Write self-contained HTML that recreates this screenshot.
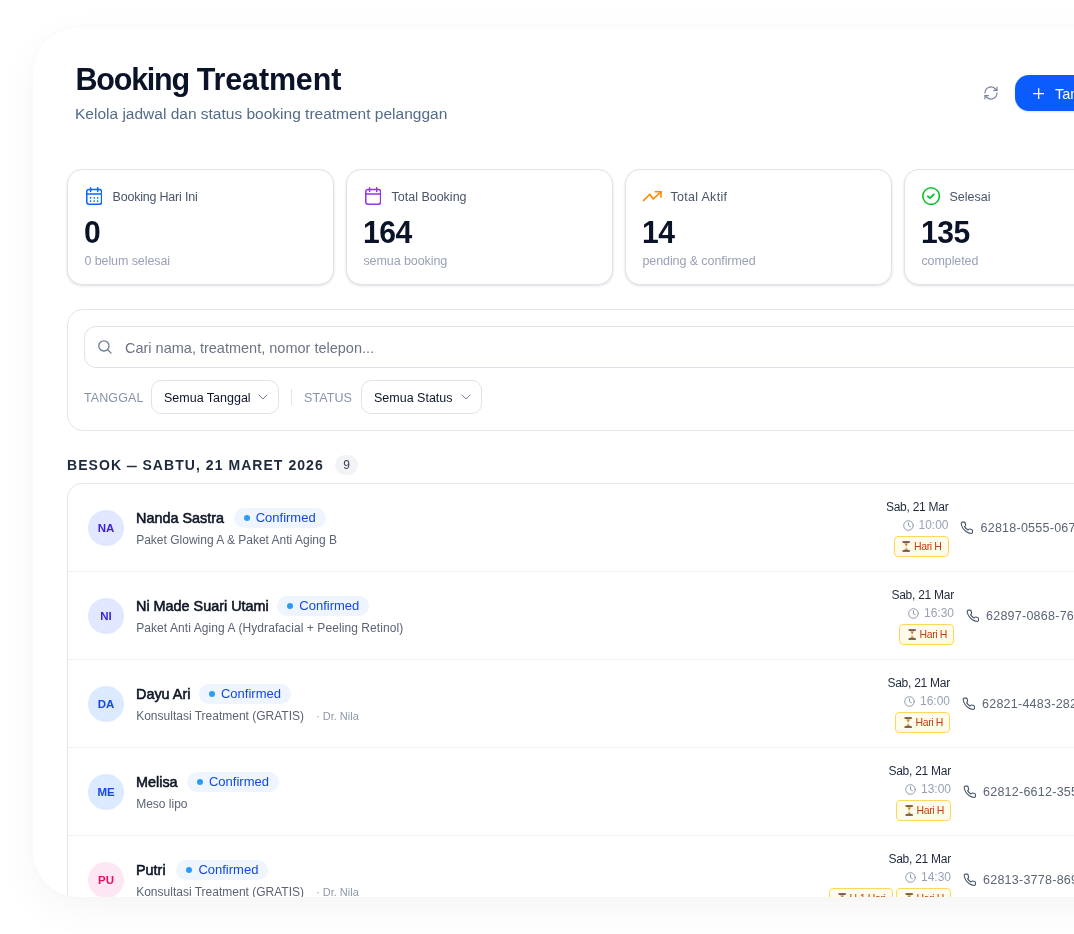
<!DOCTYPE html>
<html lang="id">
<head>
<meta charset="utf-8">
<title>Booking Treatment</title>
<style>
*{box-sizing:border-box;margin:0;padding:0}
html,body{width:1074px;height:934px;overflow:hidden;background:#fff}
body{font-family:"Liberation Sans",sans-serif;color:#0f172a;position:relative}
.card{position:absolute;left:33px;top:28px;width:1400px;height:868.5px;will-change:transform;background:#fff;border-radius:46px;overflow:hidden;
  box-shadow:0 12px 40px rgba(0,0,0,.042),0 0 18px rgba(0,0,0,.022)}
.shadow{position:absolute;left:33px;top:28px;width:1400px;height:868px;border-radius:46px;}
.abs{position:absolute;white-space:nowrap}
/* header */
.title{left:42.6px;top:33.4px;font-size:30.5px;font-weight:700;letter-spacing:-.58px;color:#0b1329;line-height:36px}
.subtitle{left:42px;top:76px;font-size:15.5px;color:#536b8a;line-height:20px}
.refresh{left:949.7px;top:56.7px;width:16px;height:16px;color:#72819a}
.btn{left:982px;top:47px;height:36px;width:190px;border-radius:14px;background:#0b5cff;color:#fff;font-size:14.5px;
  display:flex;align-items:center;padding-left:18px;padding-top:1px;box-shadow:0 1px 2px rgba(15,23,42,.12)}
.btn svg{width:11.4px;height:11.4px;margin-right:10.6px;flex:none}
/* stat cards */
.stat{top:141px;width:267px;height:116px;border:1px solid #e0e3e9;border-radius:15px;background:#fff;
  box-shadow:0 1px 2.5px rgba(15,23,42,.14)}
.stat .ic{position:absolute;left:18px;top:17px;width:16.4px;height:18px}
.stat .lb{position:absolute;left:44.5px;top:19px;font-size:12.5px;line-height:16px;color:#475569}
.stat .num{position:absolute;left:16px;top:43.5px;font-size:32px;line-height:36px;font-weight:700;color:#0b1329;letter-spacing:-.5px;transform:scaleX(.94);transform-origin:0 0}
.stat .sub{position:absolute;left:16.4px;top:83px;font-size:12.5px;letter-spacing:-.08px;line-height:16px;color:#98a2b6}
/* filter */
.filter{left:34px;top:281px;width:1300px;height:122px;border:1px solid #e2e5ec;border-radius:16px;background:#fff}
.search{left:16px;top:16px;width:1200px;height:42px;border:1px solid #dfe3ea;border-radius:12px;background:#fff}
.search svg{position:absolute;left:12.5px;top:13.2px;width:14px;height:14px;color:#6b7c95}
.search span{position:absolute;left:40px;top:12px;font-size:14.5px;line-height:18px;color:#6b7483}
.flabel{font-size:12.5px;letter-spacing:.1px;color:#8793ab;line-height:16px}
.select{height:33.5px;border:1px solid #dfe3ea;border-radius:10px;background:#fff;font-size:12.5px;color:#0f172a;line-height:35px;padding-left:12px;overflow:hidden}
.select svg{position:absolute;right:10px;top:13px;width:10px;height:6px;color:#75839a}
.vdiv{width:1px;height:16px;background:#dfe3ea}
/* section */
.sechead{left:34px;top:428px;font-size:14px;font-weight:700;letter-spacing:1.05px;color:#1e293b;line-height:18px}
.count{left:302px;top:427px;width:23px;height:20px;border-radius:10px;background:#f1f3f6;color:#334155;font-size:12px;line-height:20px;text-align:center}
.list{left:34px;top:455px;width:1300px;height:900px;border:1px solid #e2e5ec;border-radius:15px;background:#fff}
.row{position:absolute;left:0;width:100%;height:88px;border-bottom:1px solid #eef0f4}
.av{position:absolute;left:20px;top:25.5px;width:36px;height:36px;border-radius:50%;font-size:11.5px;font-weight:700;line-height:36px;text-align:center}
.nm{position:absolute;left:68px;top:25px;font-size:14.4px;font-weight:400;-webkit-text-stroke:.55px #0b1220;color:#0b1220;line-height:18px;color:#0f172a;white-space:nowrap}
.badge{position:relative;display:inline-block;vertical-align:top;top:-1.2px;margin-left:8.6px;font-weight:400;-webkit-text-stroke:0;height:20px;border-radius:10px;background:#eef5ff;color:#1447e6;font-size:13px;line-height:20px;padding:0 10px 0 22px;white-space:nowrap}
.badge i{position:absolute;left:10px;top:7px;width:6px;height:6px;border-radius:50%;background:#2b9bf5}
.tr{position:absolute;left:68.2px;top:47.8px;font-size:12px;line-height:16px;color:#5b6475;white-space:nowrap}
.tr em{font-style:normal;color:#8e98ab;margin-left:12px;font-size:11px}
.rt{position:absolute;top:0;height:88px}
.dt{position:absolute;right:-.5px;top:14.7px;font-size:12px;letter-spacing:-.25px;line-height:16px;color:#1e293b;white-space:nowrap}
.tm{position:absolute;right:-.5px;top:33px;font-size:12px;line-height:16px;color:#98a2b6;white-space:nowrap}
.tm svg{position:absolute;left:-15.5px;top:2.5px;width:11px;height:11px}
.hh{position:absolute;right:-.6px;top:51.8px;height:20.8px;border:1px solid #fcd75a;background:#fffbea;border-radius:4px;color:#c2410c;font-size:10.5px;letter-spacing:-.4px;line-height:18.8px;padding:0 6.2px 0 19.2px;white-space:nowrap}
.hh svg{position:absolute;left:7.6px;top:3.8px;width:8.4px;height:11px}
.ph{position:absolute;top:35px;font-size:12.5px;letter-spacing:.25px;line-height:18px;color:#5b6475;white-space:nowrap}
.ph svg{position:absolute;left:-20.5px;top:1.8px;width:13.6px;height:13.6px;color:#475569}
</style>
</head>
<body>
<div class="card">
  <div class="abs title"><span style="letter-spacing:-1.25px">Booking</span> <span style="letter-spacing:-.15px">Treatment</span></div>
  <div class="abs subtitle">Kelola jadwal dan status booking treatment pelanggan</div>
  <svg class="abs refresh" viewBox="0 0 24 24" fill="none" stroke="currentColor" stroke-width="1.7" stroke-linecap="round" stroke-linejoin="round"><path d="M3 12a9 9 0 0 1 15-6.7L21 8"/><path d="M21 3v5h-5"/><path d="M21 12a9 9 0 0 1-15 6.7L3 16"/><path d="M3 21v-5h5"/></svg>
  <div class="abs btn"><svg viewBox="0 0 12 12" fill="none" stroke="#fff" stroke-width="1.35" stroke-linecap="round"><path d="M6 .7v10.6M.7 6h10.6"/></svg>Tambah Booking</div>

  <div class="abs stat" style="left:34px">
    <svg class="ic" viewBox="0 0 16.4 18" fill="none" stroke="#0b66ff" stroke-width="1.5" stroke-linecap="round" stroke-linejoin="round"><rect x=".8" y="2.5" width="14.8" height="14.7" rx="2.2"/><path d="M.8 6.9h14.8M4.6 .8v3.6M11.7 .8v3.6"/><path d="M4.6 10.8h.01M8.2 10.8h.01M11.7 10.8h.01M4.6 14.1h.01M8.2 14.1h.01M11.7 14.1h.01" stroke-width="1.7"/></svg>
    <div class="lb" style="letter-spacing:-.2px">Booking Hari Ini</div><div class="num">0</div><div class="sub">0 belum selesai</div>
  </div>
  <div class="abs stat" style="left:313px">
    <svg class="ic" viewBox="0 0 16.4 18" fill="none" stroke="#9333ea" stroke-width="1.5" stroke-linecap="round" stroke-linejoin="round"><rect x=".8" y="2.5" width="14.8" height="14.7" rx="2.2"/><path d="M.8 6.9h14.8M4.6 .8v3.6M11.7 .8v3.6"/></svg>
    <div class="lb">Total Booking</div><div class="num">164</div><div class="sub">semua booking</div>
  </div>
  <div class="abs stat" style="left:592px">
    <svg class="ic" style="left:16px;top:20px;width:20px;height:12px" viewBox="0 0 20 12" fill="none" stroke="#ff8a00" stroke-width="1.6" stroke-linecap="round" stroke-linejoin="round"><path d="M1.5 10.6l6.4-6.4 3.3 4.8L19 1.8"/><path d="M13.3 1.8H19v5.5"/></svg>
    <div class="lb" style="letter-spacing:.3px">Total Aktif</div><div class="num">14</div><div class="sub">pending &amp; confirmed</div>
  </div>
  <div class="abs stat" style="left:871px">
    <svg class="ic" style="left:17px;top:16.7px;width:18.2px;height:18.2px" viewBox="0 0 18.2 18.2" fill="none" stroke="#0cc42a" stroke-width="1.6" stroke-linecap="round" stroke-linejoin="round"><circle cx="9.1" cy="9.1" r="8.3"/><path d="M5.8 9.3l2.2 1.9 3.7-3.7" stroke-width="1.8"/></svg>
    <div class="lb">Selesai</div><div class="num">135</div><div class="sub">completed</div>
  </div>

  <div class="abs filter">
    <div class="abs search">
      <svg viewBox="0 0 14 14" fill="none" stroke="currentColor" stroke-width="1.3" stroke-linecap="round"><circle cx="5.9" cy="5.9" r="5.1"/><path d="M9.7 9.7l3.4 3.4"/></svg>
      <span>Cari nama, treatment, nomor telepon...</span>
    </div>
    <div class="abs flabel" style="left:16px;top:80px">TANGGAL</div>
    <div class="abs select" style="left:83px;top:70px;width:128px">Semua Tanggal<svg viewBox="0 0 10 6" fill="none" stroke="currentColor" stroke-width="1" stroke-linecap="round" stroke-linejoin="round"><path d="M1 1l4 4 4-4"/></svg></div>
    <div class="abs vdiv" style="left:223px;top:79px"></div>
    <div class="abs flabel" style="left:236px;top:80px">STATUS</div>
    <div class="abs select" style="left:293px;top:70px;width:121px">Semua Status<svg viewBox="0 0 10 6" fill="none" stroke="currentColor" stroke-width="1" stroke-linecap="round" stroke-linejoin="round"><path d="M1 1l4 4 4-4"/></svg></div>
  </div>

  <div class="abs sechead">BESOK <span style="font-size:9.5px;position:relative;top:-1.3px;-webkit-text-stroke:.4px #1e293b">—</span> SABTU, 21 MARET 2026</div>
  <div class="abs count">9</div>

  <div class="abs list" id="list">
  <div class="row" style="top:0px">
    <div class="av" style="background:#e0e7ff;color:#3a1fdc">NA</div>
    <div class="nm"><span>Nanda Sastra</span><span class="badge" style="margin-left:9.7px"><i></i>Confirmed</span></div>
    <div class="tr">Paket Glowing A &amp; Paket Anti Aging B</div>
    <div class="rt" style="left:0;width:880px">
      <div class="dt">Sab, 21 Mar</div>
      <div class="tm"><svg viewBox="0 0 11 11" fill="none" stroke="#8e98ab" stroke-width="1" stroke-linecap="round" stroke-linejoin="round"><circle cx="5.5" cy="5.5" r="4.8"/><path d="M5.5 2.8v2.9l1.9 1"/></svg>10:00</div>
      <div class="hh"><svg viewBox="0 0 8 11"><path d="M1.2 1.2h5.6L4.3 5.5l2.5 4.3H1.2l2.5-4.3z" fill="#ead9c4"/><path d="M2.2 2.6h3.6L4 5.2z" fill="#c98a3a"/><path d="M2 9.3l2-2 2 2z" fill="#c98a3a"/><rect x=".3" y=".2" width="7.4" height="1.5" rx=".4" fill="#5a3a22"/><rect x=".3" y="9.3" width="7.4" height="1.5" rx=".4" fill="#5a3a22"/></svg>Hari H</div>
    </div>
    <div class="ph" style="left:912.5px"><svg viewBox="0 0 24 24" fill="none" stroke="currentColor" stroke-width="1.9" stroke-linecap="round" stroke-linejoin="round"><path d="M22 16.92v3a2 2 0 0 1-2.18 2 19.79 19.79 0 0 1-8.63-3.07 19.5 19.5 0 0 1-6-6 19.79 19.79 0 0 1-3.07-8.67A2 2 0 0 1 4.11 2h3a2 2 0 0 1 2 1.72 12.84 12.84 0 0 0 .7 2.81 2 2 0 0 1-.45 2.11L8.09 9.91a16 16 0 0 0 6 6l1.27-1.27a2 2 0 0 1 2.11-.45 12.84 12.84 0 0 0 2.81.7A2 2 0 0 1 22 16.92z"/></svg>62818-0555-0670</div>
  </div>
  <div class="row" style="top:88px">
    <div class="av" style="background:#e0e7ff;color:#3a1fdc">NI</div>
    <div class="nm"><span>Ni Made Suari Utami</span><span class="badge"><i></i>Confirmed</span></div>
    <div class="tr" style="letter-spacing:.08px">Paket Anti Aging A (Hydrafacial + Peeling Retinol)</div>
    <div class="rt" style="left:0;width:885.5px">
      <div class="dt">Sab, 21 Mar</div>
      <div class="tm"><svg viewBox="0 0 11 11" fill="none" stroke="#8e98ab" stroke-width="1" stroke-linecap="round" stroke-linejoin="round"><circle cx="5.5" cy="5.5" r="4.8"/><path d="M5.5 2.8v2.9l1.9 1"/></svg>16:30</div>
      <div class="hh"><svg viewBox="0 0 8 11"><path d="M1.2 1.2h5.6L4.3 5.5l2.5 4.3H1.2l2.5-4.3z" fill="#ead9c4"/><path d="M2.2 2.6h3.6L4 5.2z" fill="#c98a3a"/><path d="M2 9.3l2-2 2 2z" fill="#c98a3a"/><rect x=".3" y=".2" width="7.4" height="1.5" rx=".4" fill="#5a3a22"/><rect x=".3" y="9.3" width="7.4" height="1.5" rx=".4" fill="#5a3a22"/></svg>Hari H</div>
    </div>
    <div class="ph" style="left:918.0px"><svg viewBox="0 0 24 24" fill="none" stroke="currentColor" stroke-width="1.9" stroke-linecap="round" stroke-linejoin="round"><path d="M22 16.92v3a2 2 0 0 1-2.18 2 19.79 19.79 0 0 1-8.63-3.07 19.5 19.5 0 0 1-6-6 19.79 19.79 0 0 1-3.07-8.67A2 2 0 0 1 4.11 2h3a2 2 0 0 1 2 1.72 12.84 12.84 0 0 0 .7 2.81 2 2 0 0 1-.45 2.11L8.09 9.91a16 16 0 0 0 6 6l1.27-1.27a2 2 0 0 1 2.11-.45 12.84 12.84 0 0 0 2.81.7A2 2 0 0 1 22 16.92z"/></svg>62897-0868-762</div>
  </div>
  <div class="row" style="top:176px">
    <div class="av" style="background:#dbeafe;color:#1447e6">DA</div>
    <div class="nm"><span>Dayu Ari</span><span class="badge"><i></i>Confirmed</span></div>
    <div class="tr">Konsultasi Treatment (GRATIS)<em>· Dr. Nila</em></div>
    <div class="rt" style="left:0;width:881.5px">
      <div class="dt">Sab, 21 Mar</div>
      <div class="tm"><svg viewBox="0 0 11 11" fill="none" stroke="#8e98ab" stroke-width="1" stroke-linecap="round" stroke-linejoin="round"><circle cx="5.5" cy="5.5" r="4.8"/><path d="M5.5 2.8v2.9l1.9 1"/></svg>16:00</div>
      <div class="hh"><svg viewBox="0 0 8 11"><path d="M1.2 1.2h5.6L4.3 5.5l2.5 4.3H1.2l2.5-4.3z" fill="#ead9c4"/><path d="M2.2 2.6h3.6L4 5.2z" fill="#c98a3a"/><path d="M2 9.3l2-2 2 2z" fill="#c98a3a"/><rect x=".3" y=".2" width="7.4" height="1.5" rx=".4" fill="#5a3a22"/><rect x=".3" y="9.3" width="7.4" height="1.5" rx=".4" fill="#5a3a22"/></svg>Hari H</div>
    </div>
    <div class="ph" style="left:914.0px"><svg viewBox="0 0 24 24" fill="none" stroke="currentColor" stroke-width="1.9" stroke-linecap="round" stroke-linejoin="round"><path d="M22 16.92v3a2 2 0 0 1-2.18 2 19.79 19.79 0 0 1-8.63-3.07 19.5 19.5 0 0 1-6-6 19.79 19.79 0 0 1-3.07-8.67A2 2 0 0 1 4.11 2h3a2 2 0 0 1 2 1.72 12.84 12.84 0 0 0 .7 2.81 2 2 0 0 1-.45 2.11L8.09 9.91a16 16 0 0 0 6 6l1.27-1.27a2 2 0 0 1 2.11-.45 12.84 12.84 0 0 0 2.81.7A2 2 0 0 1 22 16.92z"/></svg>62821-4483-2825</div>
  </div>
  <div class="row" style="top:264px">
    <div class="av" style="background:#dbeafe;color:#1447e6">ME</div>
    <div class="nm"><span>Melisa</span><span class="badge" style="margin-left:9.4px"><i></i>Confirmed</span></div>
    <div class="tr">Meso lipo</div>
    <div class="rt" style="left:0;width:882.5px">
      <div class="dt">Sab, 21 Mar</div>
      <div class="tm"><svg viewBox="0 0 11 11" fill="none" stroke="#8e98ab" stroke-width="1" stroke-linecap="round" stroke-linejoin="round"><circle cx="5.5" cy="5.5" r="4.8"/><path d="M5.5 2.8v2.9l1.9 1"/></svg>13:00</div>
      <div class="hh"><svg viewBox="0 0 8 11"><path d="M1.2 1.2h5.6L4.3 5.5l2.5 4.3H1.2l2.5-4.3z" fill="#ead9c4"/><path d="M2.2 2.6h3.6L4 5.2z" fill="#c98a3a"/><path d="M2 9.3l2-2 2 2z" fill="#c98a3a"/><rect x=".3" y=".2" width="7.4" height="1.5" rx=".4" fill="#5a3a22"/><rect x=".3" y="9.3" width="7.4" height="1.5" rx=".4" fill="#5a3a22"/></svg>Hari H</div>
    </div>
    <div class="ph" style="left:915.0px"><svg viewBox="0 0 24 24" fill="none" stroke="currentColor" stroke-width="1.9" stroke-linecap="round" stroke-linejoin="round"><path d="M22 16.92v3a2 2 0 0 1-2.18 2 19.79 19.79 0 0 1-8.63-3.07 19.5 19.5 0 0 1-6-6 19.79 19.79 0 0 1-3.07-8.67A2 2 0 0 1 4.11 2h3a2 2 0 0 1 2 1.72 12.84 12.84 0 0 0 .7 2.81 2 2 0 0 1-.45 2.11L8.09 9.91a16 16 0 0 0 6 6l1.27-1.27a2 2 0 0 1 2.11-.45 12.84 12.84 0 0 0 2.81.7A2 2 0 0 1 22 16.92z"/></svg>62812-6612-3559</div>
  </div>
  <div class="row" style="top:352px">
    <div class="av" style="background:#fce7f3;color:#e60f62">PU</div>
    <div class="nm"><span>Putri</span><span class="badge" style="margin-left:10.8px"><i></i>Confirmed</span></div>
    <div class="tr">Konsultasi Treatment (GRATIS)<em>· Dr. Nila</em></div>
    <div class="rt" style="left:0;width:882.5px">
      <div class="dt">Sab, 21 Mar</div>
      <div class="tm"><svg viewBox="0 0 11 11" fill="none" stroke="#8e98ab" stroke-width="1" stroke-linecap="round" stroke-linejoin="round"><circle cx="5.5" cy="5.5" r="4.8"/><path d="M5.5 2.8v2.9l1.9 1"/></svg>14:30</div>
      <div class="hh" style="right:57.9px"><svg viewBox="0 0 8 11"><path d="M1.2 1.2h5.6L4.3 5.5l2.5 4.3H1.2l2.5-4.3z" fill="#ead9c4"/><path d="M2.2 2.6h3.6L4 5.2z" fill="#c98a3a"/><path d="M2 9.3l2-2 2 2z" fill="#c98a3a"/><rect x=".3" y=".2" width="7.4" height="1.5" rx=".4" fill="#5a3a22"/><rect x=".3" y="9.3" width="7.4" height="1.5" rx=".4" fill="#5a3a22"/></svg>H-1 Hari</div><div class="hh"><svg viewBox="0 0 8 11"><path d="M1.2 1.2h5.6L4.3 5.5l2.5 4.3H1.2l2.5-4.3z" fill="#ead9c4"/><path d="M2.2 2.6h3.6L4 5.2z" fill="#c98a3a"/><path d="M2 9.3l2-2 2 2z" fill="#c98a3a"/><rect x=".3" y=".2" width="7.4" height="1.5" rx=".4" fill="#5a3a22"/><rect x=".3" y="9.3" width="7.4" height="1.5" rx=".4" fill="#5a3a22"/></svg>Hari H</div>
    </div>
    <div class="ph" style="left:915.0px"><svg viewBox="0 0 24 24" fill="none" stroke="currentColor" stroke-width="1.9" stroke-linecap="round" stroke-linejoin="round"><path d="M22 16.92v3a2 2 0 0 1-2.18 2 19.79 19.79 0 0 1-8.63-3.07 19.5 19.5 0 0 1-6-6 19.79 19.79 0 0 1-3.07-8.67A2 2 0 0 1 4.11 2h3a2 2 0 0 1 2 1.72 12.84 12.84 0 0 0 .7 2.81 2 2 0 0 1-.45 2.11L8.09 9.91a16 16 0 0 0 6 6l1.27-1.27a2 2 0 0 1 2.11-.45 12.84 12.84 0 0 0 2.81.7A2 2 0 0 1 22 16.92z"/></svg>62813-3778-8691</div>
  </div>
  </div>
</div>
</body>
</html>
